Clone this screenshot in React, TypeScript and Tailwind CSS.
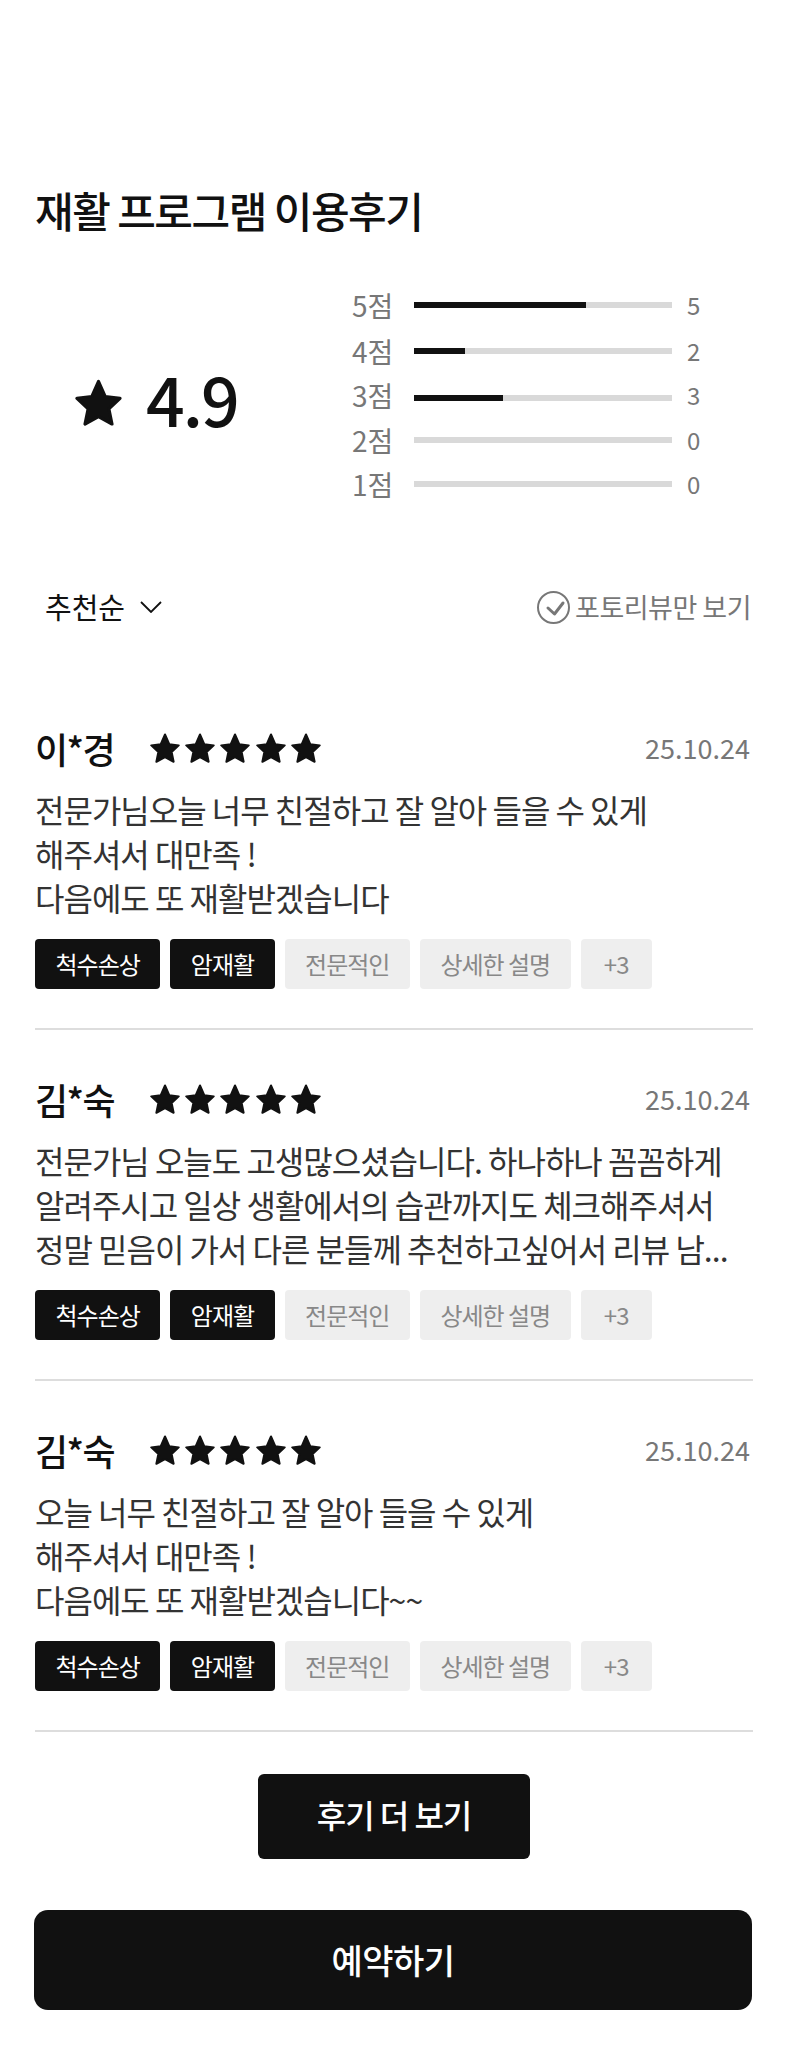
import React from "react";

// ---------- Data ----------
const scores = [
    { label: "5점", count: 5, fill: "w-[172px]", gap: "mt-0", shift: "" },
    { label: "4점", count: 2, fill: "w-[51px]", gap: "mt-[6px]", shift: "" },
    { label: "3점", count: 3, fill: "w-[89px]", gap: "mt-[7px]", shift: "-translate-y-[3px]" },
    { label: "2점", count: 0, fill: "w-0", gap: "mt-[2px]", shift: "" },
    { label: "1점", count: 0, fill: "w-0", gap: "mt-[4px]", shift: "" },
];

const reviews = [
    {
        name: "이*경",
        date: "25.10.24",
        body: "전문가님오늘 너무 친절하고 잘 알아 들을 수 있게\n해주셔서 대만족 !\n다음에도 또 재활받겠습니다",
    },
    {
        name: "김*숙",
        date: "25.10.24",
        body: "전문가님 오늘도 고생많으셨습니다. 하나하나 꼼꼼하게\n알려주시고 일상 생활에서의 습관까지도 체크해주셔서\n정말 믿음이 가서 다른 분들께 추천하고싶어서 리뷰 남...",
    },
    {
        name: "김*숙",
        date: "25.10.24",
        body: "오늘 너무 친절하고 잘 알아 들을 수 있게\n해주셔서 대만족 !\n다음에도 또 재활받겠습니다~~",
    },
];

const darkTags = ["척수손상", "암재활"];
const lightTags = ["전문적인", "상세한 설명", "+3"];

// ---------- Icons ----------
const StarIcon: React.FC<{ className: string }> = ({ className }) => (
    <svg viewBox="0 0 24 24" className={className} fill="#111111">
        <path
            d="M12 1.2l3.4 7.7 7.6 1-5.7 5.3 1.6 7.8-6.9-3.8-6.9 3.8 1.6-7.8L1 9.9l7.6-1L12 1.2z"
            stroke="#111111"
            strokeWidth="1.6"
            strokeLinejoin="round"
        />
    </svg>
);

// ---------- Component ----------
export default function App() {
    return (
        <div className="h-[2048px] w-[786px] bg-white pl-[35px] pr-[33px] pt-[186px] font-['Noto_Sans_CJK_KR','Noto_Sans',sans-serif] text-[#111111]">
            {/* Title */}
            <h2 className="text-[42px] leading-[48px] font-medium tracking-[-1.5px]">재활 프로그램 이용후기</h2>

            {/* Score summary */}
            <div className="mt-[51px] flex">
                <div className="flex w-[318px] items-center pl-[40px] pt-[16px]">
                    <StarIcon className="h-[47px] w-[47px]" />
                    <span className="ml-[24px] pb-[9px] text-[68px] leading-none font-medium tracking-[-2px]">4.9</span>
                </div>
                <div>
                    {scores.map((s) => (
                        <div key={s.label} className={`flex h-[40px] items-center ${s.gap}`}>
                            <span className={`w-[61px] -translate-x-[1px] text-[28px] text-[#777777] ${s.shift}`}>{s.label}</span>
                            <div className="h-[6px] w-[258px] bg-[#d9d9d9]">
                                <div className={`h-full bg-[#111111] ${s.fill}`} />
                            </div>
                            <span className={`ml-[15px] text-[24px] text-[#777777] ${s.shift}`}>{s.count}</span>
                        </div>
                    ))}
                </div>
            </div>

            {/* Sort / filter */}
            <div className="mt-[86px] flex h-[34px] items-center justify-between pl-[10px] pr-[2px]">
                <div className="flex items-center">
                    <span className="text-[29px]">추천순</span>
                    <svg viewBox="0 0 22 12" className="ml-[15px] h-[12px] w-[22px]" fill="none" stroke="#111111" strokeWidth="1.8">
                        <path d="M1 1l10 10L21 1" />
                    </svg>
                </div>
                <div className="flex items-center gap-[5px]">
                    <svg viewBox="0 0 33 33" className="h-[33px] w-[33px]" fill="none" stroke="#777777" strokeWidth="2">
                        <circle cx="16.5" cy="16.5" r="15.5" />
                        <path d="M11 17l6.5 6L26 12" strokeWidth="3" strokeLinecap="round" strokeLinejoin="round" />
                    </svg>
                    <span className="text-[27px] tracking-[-0.5px] text-[#777777]">포토리뷰만 보기</span>
                </div>
            </div>

            {/* Reviews */}
            <ul className="mt-[102px]">
                {reviews.map((r, i) => (
                    <li key={i} className="mt-[47px] border-b-2 border-[#dddddd] pb-[39px] first:mt-[102px]">
                        <div className="flex h-[44px] items-center justify-between pr-[3px]">
                            <div className="flex items-center">
                                <span className="w-[115px] text-[36px] font-medium tracking-[-1.5px]">{r.name}</span>
                                <div className="flex gap-[5.2px]">
                                    {[0, 1, 2, 3, 4].map((n) => (
                                        <StarIcon key={n} className="h-[30px] w-[30px]" />
                                    ))}
                                </div>
                            </div>
                            <span className="text-[27px] text-[#777777]">{r.date}</span>
                        </div>
                        <p className="mt-[17px] whitespace-pre-line text-[32px] leading-[44px] tracking-[-1px] text-[#333333]">{r.body}</p>
                        <div className="mt-[20px] flex gap-[10px]">
                            {darkTags.map((t) => (
                                <span key={t} className="flex h-[50px] min-w-[71px] items-center justify-center rounded-[4px] bg-[#111111] px-[20.5px] text-[24px] tracking-[-1px] text-white">
                                    {t}
                                </span>
                            ))}
                            {lightTags.map((t) => (
                                <span key={t} className="flex h-[50px] min-w-[71px] items-center justify-center rounded-[4px] bg-[#eeeeee] px-[20.5px] text-[24px] tracking-[-1px] text-[#888888]">
                                    {t}
                                </span>
                            ))}
                        </div>
                    </li>
                ))}
            </ul>

            {/* Actions */}
            <div className="mt-[42px] flex justify-center">
                <button type="button" className="h-[85px] w-[272px] rounded-[6px] bg-[#111111] pb-[6px] text-[32px] font-medium tracking-[-1px] text-white">
                    후기 더 보기
                </button>
            </div>
            <button type="button" className="mt-[51px] h-[100px] w-[718px] -translate-x-[1px] rounded-[14px] bg-[#111111] pb-[2px] text-[34px] font-medium tracking-[-0.5px] text-white">
                예약하기
            </button>
        </div>
    );
}
